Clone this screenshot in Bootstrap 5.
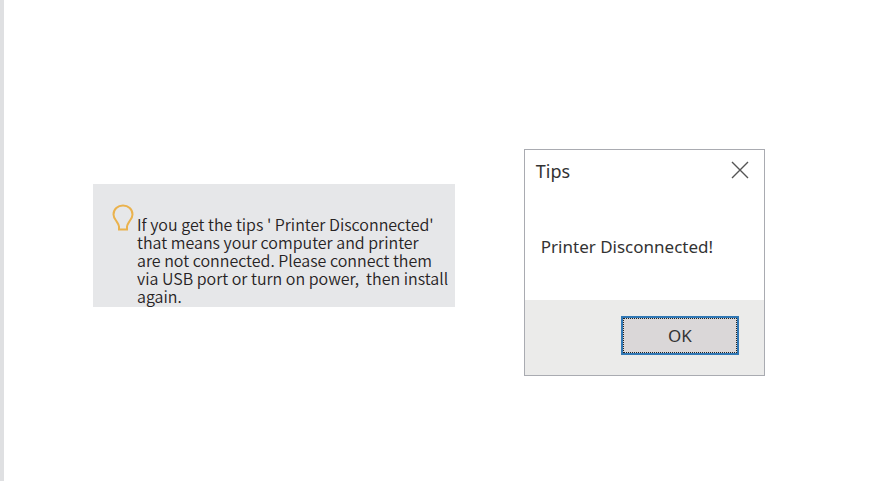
<!DOCTYPE html>
<html lang="en">
<head>
<meta charset="utf-8">
<meta name="viewport" content="width=device-width, initial-scale=1">
<title>Printer Disconnected</title>
<link href="https://cdn.jsdelivr.net/npm/bootstrap@5.3.0/dist/css/bootstrap.min.css" rel="stylesheet">
<style>
.page { border-left: 4px solid #dfe0e2; padding: 149px 107px 0 89px; }
.split { display: grid; grid-template-columns: 3fr 2fr; column-gap: 69px; }
.tip-note { margin-top: 35px; padding: 20px 0 2px 19px; column-gap: 3px; background: #e6e7e9; color: #272324; font: 350 16px/18px "Noto Sans CJK SC", sans-serif; }
.tip-note p { padding-top: 11px; white-space: pre-wrap; }
.bulb { width: 22px; height: 28px; }
.tips-window { border: 1px solid #a9abb1; color: #333; font: 17px/24px "Noto Sans", sans-serif; }
.tips-head { padding: 9px 13px 0 11px; }
.tips-head h1 { font-size: 18px; line-height: 24px; font-weight: 400; }
.close-x { width: 21px; height: 21px; color: #555; }
.tips-body { padding: 52px 16px 41px; }
.tips-foot { background: #ebebea; padding: 16px 25px 20px; }
.ok-btn { width: 118px; height: 39px; border: 2px solid #3178b5; background: #dad7d8; color: #333; font-size: 17px; }
.ok-btn > span { border: 1px dotted #222; }
</style>
<script src="https://cdn.jsdelivr.net/npm/bootstrap@5.3.0/dist/js/bootstrap.bundle.min.js" defer></script>
</head>
<body class="bg-white">
<main class="page min-vh-100">
  <div class="split align-items-start">
    <aside class="tip-note d-flex align-items-start">
      <svg class="bulb flex-shrink-0" viewBox="0 0 22 28" fill="none" stroke="#eab24d" stroke-width="2" aria-hidden="true"><path d="M7 25.500V22.500C7 20.500 5.500 19 4 16.500C2.500 14.500 1.500 12.800 1.500 10.500C1.500 5.300 5.700 1.500 11 1.500S20.500 5.300 20.500 10.500C20.500 12.800 19.500 14.500 18 16.500C16.500 19 15 20.500 15 22.500V25.500Z"/></svg>
      <p class="mb-0">If you get the tips ' Printer Disconnected'
that means your computer and printer
are not connected. Please connect them
via USB port or turn on power,  then install
again.</p>
    </aside>
    <section class="tips-window bg-white" role="dialog" aria-labelledby="tips-title">
      <header class="tips-head d-flex justify-content-between align-items-center">
        <h1 class="mb-0" id="tips-title">Tips</h1>
        <button type="button" class="close-x btn p-0 border-0 rounded-0 d-flex" aria-label="Close"><svg width="21" height="21" viewBox="0 0 21 21" stroke="currentColor" stroke-width="1.400" aria-hidden="true"><path d="M2 1L18 17M18 1L2 17"/></svg></button>
      </header>
      <p class="tips-body mb-0">Printer Disconnected!</p>
      <footer class="tips-foot d-flex justify-content-end">
        <button type="button" class="ok-btn btn rounded-0 p-0 d-flex"><span class="flex-fill align-self-stretch d-flex align-items-center justify-content-center">OK</span></button>
      </footer>
    </section>
  </div>
</main>
</body>
</html>
